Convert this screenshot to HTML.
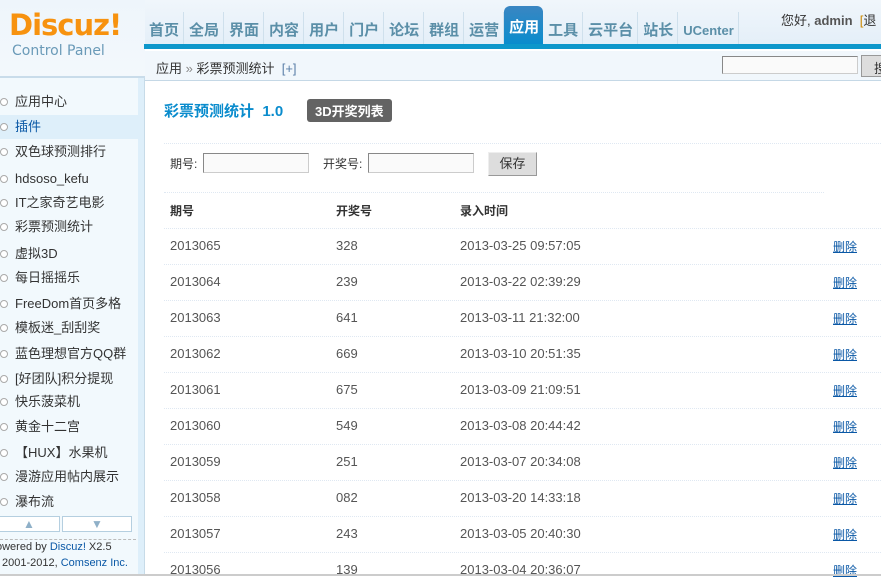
<!DOCTYPE html>
<html><head><meta charset="utf-8"><style>
*{margin:0;padding:0;box-sizing:border-box}
body{width:881px;height:576px;overflow:hidden;background:#fff;font-family:"Liberation Sans","Noto Sans CJK SC",sans-serif;font-size:12px;color:#333;position:relative}
.abs{position:absolute}
#hd{left:0;top:0;width:881px;height:48px;background:linear-gradient(#f0f6fb,#e3eef8)}
#logo{left:9px;top:8px;font-size:29px;font-weight:bold;color:#f7920f;letter-spacing:-1px;line-height:34px;font-family:"DejaVu Sans",sans-serif}
#cp{left:12px;top:43px;font-size:14px;color:#6a9ab8;font-family:"DejaVu Sans",sans-serif}
#nav{left:144px;top:6px;height:38px;display:flex}
#nav span{font-size:15px;font-weight:bold;color:#5b8fa8;padding:11px 4px 0 5px;border-right:1px solid #cfe0ec;height:32px;margin-top:6px;line-height:16px}
#nav span.on{background:linear-gradient(#3a86c2,#0a8ccd);color:#fff;border-radius:6px 6px 0 0;margin-top:0;padding-top:14px;height:38px;border:none}
#bar{left:144px;top:44px;width:737px;height:5px;background:#0d97cb}
#user{left:781px;top:10px;font-size:13px;color:#333}
#side{left:0;top:78px;width:145px;height:498px;background:#f2f9fd;border-right:1px solid #c7dbe8}
#side .col{position:absolute;right:0;top:0;width:6px;height:100%;background:#deeffa}
#lt{left:0;top:0;width:145px;height:78px;background:linear-gradient(#eef5fb,#f3f8fc);border-bottom:2px solid #c9dcea}
#crumb{left:145px;top:51px;width:736px;height:30px;background:#f1f7fc;border-bottom:1px solid #c5d8e6;font-size:13px;color:#333;padding:7px 0 0 11px}
.it{position:absolute;left:0;width:138px;height:24px;font-size:13px;color:#333;padding-left:15px;line-height:24px}
.it:before{content:"";position:absolute;left:0;top:8px;width:6px;height:6px;border:1px solid #aaa;border-radius:50%;background:#fff}
.it.on{background:#deeffa;color:#0a58a6}
#t{left:164px;top:100px;font-size:15px;font-weight:bold;color:#0a8ccd}
#badge{left:307px;top:99px;background:#636363;color:#fff;font-weight:bold;font-size:13px;padding:2px 8px;border-radius:3px}
.dl{position:absolute;height:0;border-top:1px dotted #dfe8f2}
input.b{position:absolute;height:20px;border:1px solid #888;border-right-color:#ccc;border-bottom-color:#ccc;background:#fafafa}
.row{position:absolute;left:170px;font-size:13px;color:#555}
.row span{position:absolute;white-space:nowrap}
.del{color:#0a58a6;text-decoration:underline;font-size:12px}
</style></head><body>
<div class="abs" id="hd"></div>
<div class="abs" id="lt"></div>
<div class="abs" id="logo">Discuz!</div>
<div class="abs" id="cp">Control Panel</div>
<div class="abs" id="nav"><span>首页</span><span>全局</span><span>界面</span><span>内容</span><span>用户</span><span>门户</span><span>论坛</span><span>群组</span><span>运营</span><span class="on">应用</span><span>工具</span><span>云平台</span><span>站长</span><span style="font-size:13px">UCenter</span></div>
<div class="abs" id="bar"></div>
<div class="abs" id="user">您好, <b style="color:#555">admin</b> &nbsp;<span style="color:#c80">[</span>退</div>
<div class="abs" id="crumb">应用 <span style="color:#888">»</span> 彩票预测统计 &nbsp;<span style="color:#5a7fa8">[+]</span></div>
<input class="b" style="left:722px;top:56px;width:136px;height:18px">
<div class="abs" style="left:861px;top:55px;width:22px;height:22px;background:#ddd;border:1px solid #999;font-size:13px;padding:2px 0 0 12px">搜</div>
<div class="abs" id="side"><div class="col"></div>
<div class="it" style="top:12px">应用中心</div>
<div class="it on" style="top:37px">插件</div>
<div class="it" style="top:62px">双色球预测排行</div>
<div class="it" style="top:89px">hdsoso_kefu</div>
<div class="it" style="top:113px">IT之家奇艺电影</div>
<div class="it" style="top:137px">彩票预测统计</div>
<div class="it" style="top:164px">虚拟3D</div>
<div class="it" style="top:188px">每日摇摇乐</div>
<div class="it" style="top:214px">FreeDom首页多格</div>
<div class="it" style="top:238px">模板迷_刮刮奖</div>
<div class="it" style="top:264px">蓝色理想官方QQ群</div>
<div class="it" style="top:289px">[好团队]积分提现</div>
<div class="it" style="top:312px">快乐菠菜机</div>
<div class="it" style="top:337px">黄金十二宫</div>
<div class="it" style="top:363px">【HUX】水果机</div>
<div class="it" style="top:387px">漫游应用帖内展示</div>
<div class="it" style="top:412px">瀑布流</div>
<div class="abs" style="left:-2px;top:438px;width:62px;height:16px;border:1px solid #b5cfe0;background:#fff;text-align:center;color:#8fb0c8;font-size:12px;line-height:14px">▲</div>
<div class="abs" style="left:62px;top:438px;width:70px;height:16px;border:1px solid #b5cfe0;background:#fff;text-align:center;color:#8fb0c8;font-size:12px;line-height:14px">▼</div>
<div class="dl" style="left:0;top:461px;width:136px;border-top:1px dashed #bbb"></div>
<div class="abs" style="left:-4px;top:463px;font-size:11px;color:#333;white-space:nowrap">owered by <span style="color:#0a58a6">Discuz!</span> X2.5</div>
<div class="abs" style="left:2px;top:479px;font-size:11px;color:#333;white-space:nowrap">2001-2012, <span style="color:#0a58a6">Comsenz Inc.</span></div>
</div>
<div class="abs" id="t">彩票预测统计 &nbsp;1.0</div>
<div class="abs" id="badge">3D开奖列表</div>
<div class="dl" style="left:164px;top:143px;width:717px"></div>
<div class="abs" style="left:170px;top:155px;font-size:12px">期号:</div>
<input class="b" style="left:203px;top:153px;width:106px">
<div class="abs" style="left:323px;top:155px;font-size:12px">开奖号:</div>
<input class="b" style="left:368px;top:153px;width:106px">
<div class="abs" style="left:488px;top:152px;width:49px;height:24px;background:#ddd;border:1px solid #999;border-top-color:#eee;border-left-color:#eee;font-size:13px;text-align:center;line-height:22px">保存</div>
<div class="dl" style="left:164px;top:192px;width:660px"></div>
<div class="row" style="top:202px;font-weight:bold;color:#333;font-size:12px"><span style="left:0">期号</span><span style="left:166px">开奖号</span><span style="left:290px">录入时间</span></div>
<div class="dl" style="left:164px;top:228px;width:717px"></div>
<div class="row" style="top:238px"><span style="left:0">2013065</span><span style="left:166px">328</span><span style="left:290px">2013-03-25 09:57:05</span><span class="del" style="left:663px">删除</span></div>
<div class="dl" style="left:164px;top:264px;width:717px"></div>
<div class="row" style="top:274px"><span style="left:0">2013064</span><span style="left:166px">239</span><span style="left:290px">2013-03-22 02:39:29</span><span class="del" style="left:663px">删除</span></div>
<div class="dl" style="left:164px;top:300px;width:717px"></div>
<div class="row" style="top:310px"><span style="left:0">2013063</span><span style="left:166px">641</span><span style="left:290px">2013-03-11 21:32:00</span><span class="del" style="left:663px">删除</span></div>
<div class="dl" style="left:164px;top:336px;width:717px"></div>
<div class="row" style="top:346px"><span style="left:0">2013062</span><span style="left:166px">669</span><span style="left:290px">2013-03-10 20:51:35</span><span class="del" style="left:663px">删除</span></div>
<div class="dl" style="left:164px;top:372px;width:717px"></div>
<div class="row" style="top:382px"><span style="left:0">2013061</span><span style="left:166px">675</span><span style="left:290px">2013-03-09 21:09:51</span><span class="del" style="left:663px">删除</span></div>
<div class="dl" style="left:164px;top:408px;width:717px"></div>
<div class="row" style="top:418px"><span style="left:0">2013060</span><span style="left:166px">549</span><span style="left:290px">2013-03-08 20:44:42</span><span class="del" style="left:663px">删除</span></div>
<div class="dl" style="left:164px;top:444px;width:717px"></div>
<div class="row" style="top:454px"><span style="left:0">2013059</span><span style="left:166px">251</span><span style="left:290px">2013-03-07 20:34:08</span><span class="del" style="left:663px">删除</span></div>
<div class="dl" style="left:164px;top:480px;width:717px"></div>
<div class="row" style="top:490px"><span style="left:0">2013058</span><span style="left:166px">082</span><span style="left:290px">2013-03-20 14:33:18</span><span class="del" style="left:663px">删除</span></div>
<div class="dl" style="left:164px;top:516px;width:717px"></div>
<div class="row" style="top:526px"><span style="left:0">2013057</span><span style="left:166px">243</span><span style="left:290px">2013-03-05 20:40:30</span><span class="del" style="left:663px">删除</span></div>
<div class="dl" style="left:164px;top:552px;width:717px"></div>
<div class="row" style="top:562px"><span style="left:0">2013056</span><span style="left:166px">139</span><span style="left:290px">2013-03-04 20:36:07</span><span class="del" style="left:663px">删除</span></div>
<div class="abs" style="left:0;top:574px;width:881px;height:2px;background:#ccc"></div>
</body></html>
